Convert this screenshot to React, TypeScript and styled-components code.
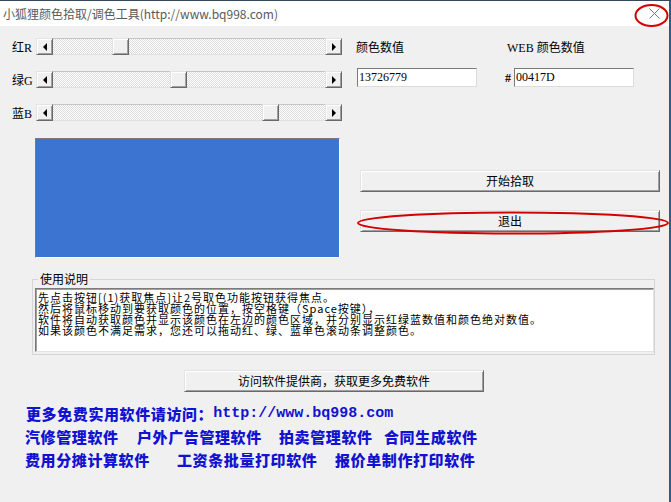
import React from 'react';
import styled, { createGlobalStyle } from 'styled-components';

const GlobalStyle = createGlobalStyle`
  html, body {
    margin: 0;
    padding: 0;
    background: #f0f0f0;
  }
  body {
    font-family: "Noto Sans CJK SC", sans-serif;
  }
`;

const CJK = '"Noto Sans CJK SC", sans-serif';
const LATIN_CJK = '"Liberation Serif", "Noto Sans CJK SC", serif';

const Window = styled.div`
  position: relative;
  width: 671px;
  height: 502px;
  box-sizing: border-box;
  background: #f0f0f0;
  border-top: 1px solid #34495e;
  border-right: 2px solid #2a5d8c;
  overflow: hidden;
  display: flex;
  flex-direction: column;
`;

const TitleBar = styled.div`
  height: 25px;
  flex: none;
  background: #fff;
  display: flex;
  align-items: center;
  justify-content: space-between;
  padding: 0 9px 0 3px;
`;

const Title = styled.span`
  font-family: ${CJK};
  font-size: 12px;
  color: #5a5a5a;
  white-space: nowrap;
`;

const CloseGlyph = styled.svg`
  width: 11px;
  height: 11px;
  display: block;
`;

const TopSection = styled.div`
  display: flex;
  padding: 12px 0 0 12px;
`;

const SliderColumn = styled.div`
  display: flex;
  flex-direction: column;
  gap: 16px;
  width: 330px;
`;

const SliderRow = styled.div`
  display: flex;
  align-items: center;
  height: 17px;
`;

const ChannelLabel = styled.span`
  width: 24px;
  font-family: ${LATIN_CJK};
  font-size: 12px;
  color: #000;
  white-space: nowrap;
`;

const Track = styled.div`
  width: 306px;
  height: 17px;
  display: flex;
  background: repeating-conic-gradient(#ffffff 0 25%, #dcdcdc 0 50%) 0 0 / 2px 2px;
  box-shadow: inset 0 1px 0 #c4c4c4, inset 0 -1px 0 #e0e0e0;
`;

const Channel = styled.div`
  flex: 1;
  display: flex;
`;

const Raised = styled.div`
  width: 17px;
  height: 17px;
  flex: none;
  box-sizing: border-box;
  background: #f0f0f0;
  border: 1px solid;
  border-color: #e3e3e3 #696969 #696969 #e3e3e3;
  box-shadow: inset 1px 1px 0 #fff, inset -1px -1px 0 #a0a0a0;
  display: flex;
  align-items: center;
  justify-content: center;
`;

const Arrow = styled.span<{ $dir: 'left' | 'right' }>`
  width: 0;
  height: 0;
  border-top: 4px solid transparent;
  border-bottom: 4px solid transparent;
  ${({ $dir }) => ($dir === 'left' ? 'border-right: 4px solid #000;' : 'border-left: 4px solid #000;')}
`;

const ColorPreview = styled.div`
  margin: 1px 0 0 23px;
  width: 305px;
  height: 120px;
  box-sizing: border-box;
  border: 1px solid;
  border-color: #7a7a7a #fff #fff #7a7a7a;
`;

const ValueColumn = styled.div`
  display: flex;
  flex-direction: column;
  margin-left: 14px;
`;

const CaptionRow = styled.div`
  display: flex;
  align-items: center;
  height: 17px;
`;

const Caption = styled.span<{ $w?: number }>`
  width: ${({ $w }) => ($w ? `${$w}px` : 'auto')};
  font-family: ${LATIN_CJK};
  font-size: 12px;
  color: #000;
  white-space: nowrap;
`;

const FieldRow = styled.div`
  display: flex;
  align-items: center;
  margin: 13px 0 0 1px;
`;

const ValueInput = styled.input`
  width: 120px;
  height: 19px;
  box-sizing: border-box;
  margin: 0;
  padding: 0 1px;
  background: #fff;
  border: 1px solid;
  border-color: #7a7a7a #dcdcdc #dcdcdc #7a7a7a;
  font-family: "Liberation Serif", serif;
  font-size: 12px;
  color: #000;
  outline: none;
`;

const Hash = styled.span`
  margin: 2px 3px 0 28px;
  font-family: "Liberation Serif", serif;
  font-size: 12px;
  font-weight: bold;
`;

const PushButton = styled.button<{ $top: number; $left: number }>`
  width: 300px;
  height: 22px;
  margin: ${({ $top, $left }) => `${$top}px 0 0 ${$left}px`};
  padding: 0;
  box-sizing: border-box;
  background: #f0f0f0;
  border: 1px solid;
  border-color: #e3e3e3 #696969 #696969 #e3e3e3;
  box-shadow: inset 1px 1px 0 #fff, inset -1px -1px 0 #a0a0a0;
  font-family: ${CJK};
  font-size: 12px;
  color: #000;
  line-height: 18px;
`;

const GroupBox = styled.fieldset`
  margin: 13px 0 0 32px;
  width: 623px;
  box-sizing: border-box;
  padding: 1px 0 2px 2px;
  border: 1px solid #d5d5d5;
  min-width: 0;
`;

const GroupLegend = styled.legend`
  margin-left: 3px;
  padding: 0 2px;
  font-family: ${CJK};
  font-size: 12px;
  line-height: 16px;
  color: #000;
`;

const NoteArea = styled.div`
  width: 619px;
  height: 64px;
  box-sizing: border-box;
  background: #fff;
  border: 1px solid;
  border-color: #7a7a7a #e3e3e3 #e3e3e3 #7a7a7a;
  box-shadow: inset 1px 1px 0 #a0a0a0;
  padding: 3px 0 0 2px;
  font-family: ${CJK};
  font-size: 11px;
  letter-spacing: 1px;
  line-height: 11px;
  color: #000;
  white-space: nowrap;
  overflow: hidden;
`;

const LinkBlock = styled.div`
  margin: 10px 0 0 25px;
  display: flex;
  flex-direction: column;
  font-family: ${CJK};
  font-size: 15px;
  font-weight: 900;
  line-height: 23px;
  letter-spacing: 0.6px;
  color: #1212d0;
`;

const LinkLine = styled.div<{ $indent?: number }>`
  display: flex;
  white-space: nowrap;
  padding-left: ${({ $indent }) => $indent ?? 0}px;
`;

const LinkItem = styled.span<{ $w?: number }>`
  width: ${({ $w }) => ($w ? `${$w}px` : 'auto')};
  flex: none;
`;

const Url = styled.span`
  font-family: "Liberation Mono", monospace;
  font-weight: bold;
  letter-spacing: 0;
`;

const Annotations = styled.svg`
  position: absolute;
  left: 0;
  top: 0;
  width: 671px;
  height: 502px;
  pointer-events: none;
`;

const channels = [
  { cn: '红', en: 'R', value: 59 },
  { cn: '绿', en: 'G', value: 117 },
  { cn: '蓝', en: 'B', value: 209 },
];

const notes = [
  '先点击按钮[(1)获取焦点]让2号取色功能按钮获得焦点。',
  '然后将鼠标移动到要获取颜色的位置，按空格键（Space按键），',
  '软件将自动获取颜色并显示该颜色在左边的颜色区域，并分别显示红绿蓝数值和颜色绝对数值。',
  '如果该颜色不满足需求，您还可以拖动红、绿、蓝单色滚动条调整颜色。',
];

function ScrollBar({ value }: { value: number }) {
  return (
    <Track>
      <Raised>
        <Arrow $dir="left" />
      </Raised>
      <Channel>
        <Raised style={{ marginLeft: value }} />
      </Channel>
      <Raised>
        <Arrow $dir="right" />
      </Raised>
    </Track>
  );
}

export default function App() {
  const [r, g, b] = channels.map((c) => c.value);

  return (
    <>
      <GlobalStyle />
      <Window>
        <TitleBar>
          <Title>小狐狸颜色拾取/调色工具(http://www.bq998.com)</Title>
          <CloseGlyph viewBox="0 0 11 11">
            <path d="M0.5 0.5 L10.5 10.5 M10.5 0.5 L0.5 10.5" stroke="#777" strokeWidth="1" fill="none" />
          </CloseGlyph>
        </TitleBar>

        <TopSection>
          <SliderColumn>
            {channels.map((c) => (
              <SliderRow key={c.en}>
                <ChannelLabel>
                  {c.cn}
                  {c.en}
                </ChannelLabel>
                <ScrollBar value={c.value} />
              </SliderRow>
            ))}
            <ColorPreview style={{ background: `rgb(${r}, ${g}, ${b})` }} />
          </SliderColumn>

          <ValueColumn>
            <CaptionRow>
              <Caption $w={151}>颜色数值</Caption>
              <Caption>WEB 颜色数值</Caption>
            </CaptionRow>
            <FieldRow>
              <ValueInput readOnly value="13726779" />
              <Hash>#</Hash>
              <ValueInput readOnly value="00417D" />
            </FieldRow>
            <PushButton $top={83} $left={4}>开始拾取</PushButton>
            <PushButton $top={18} $left={4}>退出</PushButton>
          </ValueColumn>
        </TopSection>

        <GroupBox>
          <GroupLegend>使用说明</GroupLegend>
          <NoteArea>
            {notes.map((line) => (
              <div key={line}>{line}</div>
            ))}
          </NoteArea>
        </GroupBox>

        <PushButton $top={15} $left={184}>访问软件提供商，获取更多免费软件</PushButton>

        <LinkBlock>
          <LinkLine $indent={1}>
            更多免费实用软件请访问：<Url>http://www.bq998.com</Url>
          </LinkLine>
          <LinkLine>
            <LinkItem $w={112}>汽修管理软件</LinkItem>
            <LinkItem $w={142}>户外广告管理软件</LinkItem>
            <LinkItem $w={105}>拍卖管理软件</LinkItem>
            <LinkItem>合同生成软件</LinkItem>
          </LinkLine>
          <LinkLine>
            <LinkItem $w={152}>费用分摊计算软件</LinkItem>
            <LinkItem $w={158}>工资条批量打印软件</LinkItem>
            <LinkItem>报价单制作打印软件</LinkItem>
          </LinkLine>
        </LinkBlock>

        <Annotations viewBox="0 0 671 502">
          <ellipse cx="651.5" cy="14.5" rx="16" ry="10.5" stroke="#d40000" strokeWidth="2" fill="none" />
          <ellipse cx="513" cy="222" rx="155" ry="10.5" stroke="#d40000" strokeWidth="2" fill="none" />
        </Annotations>
      </Window>
    </>
  );
}
